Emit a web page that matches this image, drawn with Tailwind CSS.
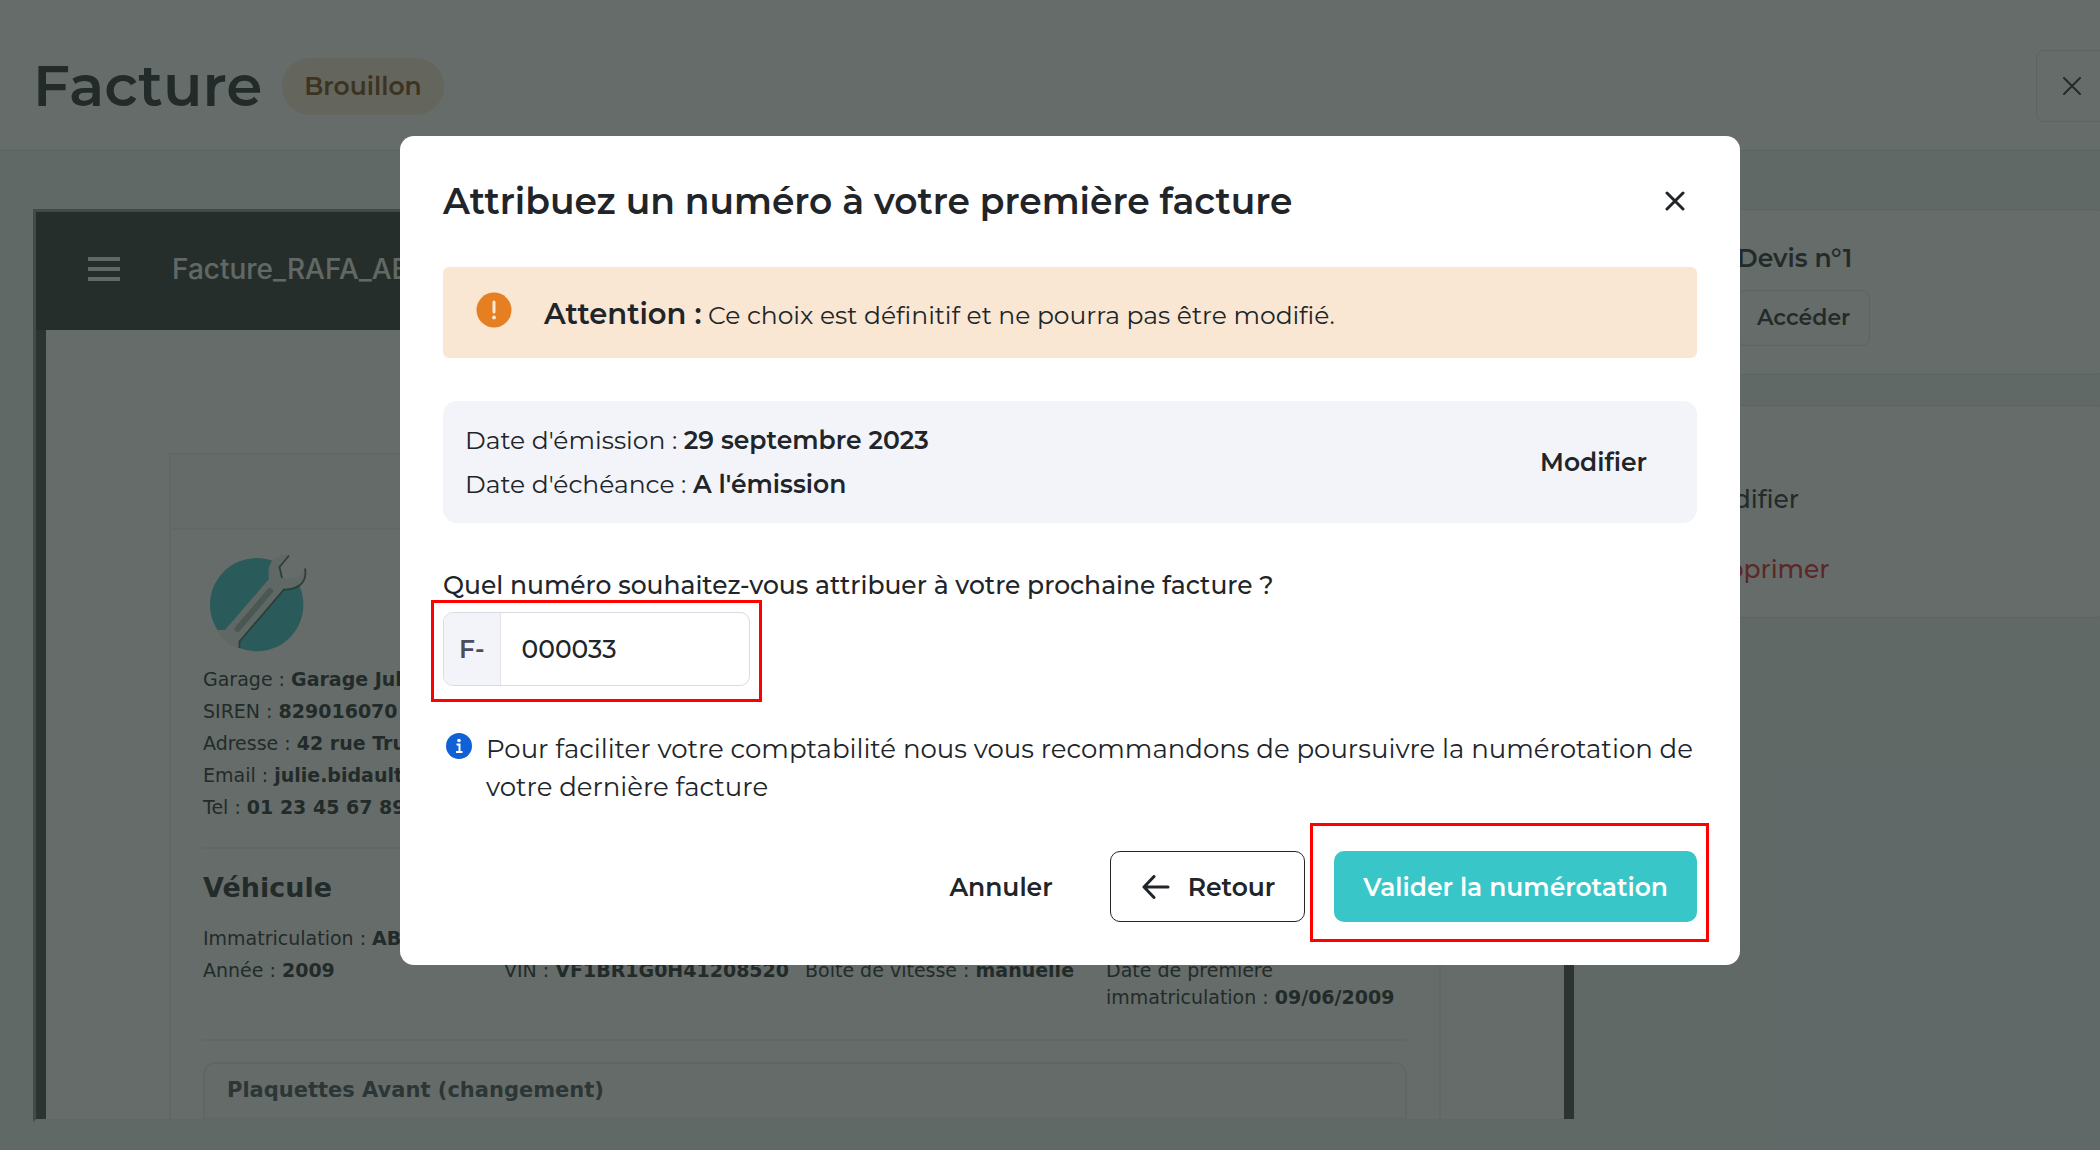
<!DOCTYPE html>
<html lang="fr">
  <head>
    <meta charset="UTF-8" />
    <meta name="viewport" content="width=device-width, initial-scale=1.0" />
    <title>Facture - Numérotation</title>
    <script src="https://cdn.jsdelivr.net/npm/@tailwindcss/browser@4"></script>
  </head>
  <body
    class="h-screen overflow-hidden bg-[#f0f3f7] font-[Montserrat,Inter,sans-serif] text-[25px] leading-8 text-[#212529]"
  >
    <div class="relative -mr-10 flex h-screen flex-col">
      <!-- En-tête -->
      <header
        class="flex h-[151px] shrink-0 items-center justify-between border-b border-[#dfe2ea] bg-white pl-[33px] pr-8 pt-[22px]"
      >
        <div class="flex items-center gap-5">
          <h1 class="text-[58px] font-semibold leading-[64px]">Facture</h1>
          <span
            class="flex h-[57px] items-center rounded-full bg-[#fae6d2] px-[22px] font-semibold text-[#77400f]"
            >Brouillon</span
          >
        </div>
        <button
          type="button"
          aria-label="Fermer la facture"
          class="flex size-[72px] items-center justify-center rounded-lg border border-[#dfe2ea]"
        >
          <svg
            class="size-5"
            viewBox="0 0 20 20"
            fill="none"
            stroke="currentColor"
            stroke-width="2"
            stroke-linecap="round"
          >
            <path d="M2 2l16 16M18 2L2 18" />
          </svg>
        </button>
      </header>

      <main
        class="grid min-h-0 flex-1 grid-cols-[minmax(0,1fr)_501px] gap-[30px] pb-7 pl-[33px] pr-8 pt-[58px]"
      >
        <!-- Aperçu PDF -->
        <section
          class="flex min-h-0 flex-col overflow-hidden border-[3px] border-b-[#eeeeee] border-l-[#8c8c8c] border-r-[#eeeeee] border-t-[#8c8c8c] bg-[#414447] font-['DejaVu_Sans',sans-serif] text-[19px] leading-[27px]"
        >
          <div
            class="flex h-[118px] shrink-0 items-center gap-[52px] bg-[#2e2f32] px-[52px] pb-1 font-[Inter,sans-serif] text-[28px] font-medium text-[#f1f1f1]"
          >
            <button type="button" aria-label="Menu">
              <svg class="h-6 w-8" viewBox="0 0 32 24" fill="currentColor">
                <path d="M0 0h32v4H0zM0 10h32v4H0zM0 20h32v4H0z" />
              </svg>
            </button>
            <span>Facture_RAFA_AB-123-CD</span>
          </div>

          <div
            class="mx-[10px] min-h-0 flex-1 overflow-hidden bg-white px-[123px] pt-[123px]"
          >
            <div class="border-2 border-[#f0eeee]">
              <div class="h-[75px] border-b-2 border-[#f0eeee] bg-[#fdfafa]"></div>
              <div class="px-8 pt-4">
                <svg class="-ml-2 h-[120px] w-[130px]" viewBox="0 0 130 120">
                  <circle cx="61.7" cy="58.7" r="46.7" fill="#3bc4c8" />
                  <path
                    d="M22 84H30L74 33Q72 20 78 14Q84 8 93 9L84 20L87 32Q92 34 99 32Q106 31 110 23Q111 32 104 38Q98 43 89 43L44 95V103Q30 99 22 84Z"
                    fill="#eaf2f1"
                  />
                  <path
                    d="M84 21L87 32Q92 34 99 32Q106 31 110 23L94 9.500Z"
                    fill="#ffffff"
                  />
                  <path
                    d="M94 9.500L84.500 21L87 32M110 22.500Q112 33 105 39Q99 44 89 43.500L44.500 95.500V102"
                    fill="none"
                    stroke="#3f6662"
                    stroke-width="1.800"
                  />
                  <path
                    d="M42.500 83L75 45"
                    stroke="#a5bbb8"
                    stroke-width="6"
                    stroke-linecap="round"
                  />
                </svg>
                <div class="flex flex-col gap-[5px]">
                  <p>Garage : <b>Garage Julie Bidault</b></p>
                  <p>SIREN : <b>829016070</b></p>
                  <p>Adresse : <b>42 rue Truffaut</b></p>
                  <p>Email : <b>julie.bidault@garage.fr</b></p>
                  <p>Tel : <b>01 23 45 67 89</b></p>
                </div>
                <hr class="mb-[23px] mt-[26px] border-t-2 border-[#f0eeee]" />
                <h2 class="mb-[21px] text-[27px] font-bold leading-8">
                  Véhicule
                </h2>
                <div class="grid grid-cols-4 gap-y-[5px]">
                  <p class="col-span-4">Immatriculation : <b>AB-123-CD</b></p>
                  <p>Année : <b>2009</b></p>
                  <p class="whitespace-nowrap">VIN : <b>VF1BR1G0H41208520</b></p>
                  <p>Boite de vitesse : <b>manuelle</b></p>
                  <p>Date de première immatriculation : <b>09/06/2009</b></p>
                </div>
                <hr class="mb-[21px] mt-7 border-t-2 border-[#f0eeee]" />
                <div class="rounded-t-xl border-2 border-[#ececec]">
                  <h3
                    class="rounded-t-xl border-b-2 border-[#ececec] bg-[#fdfafa] px-[22px] pb-[14px] pt-[13px] text-[21px] font-bold leading-[27px] text-[#404b57]"
                  >
                    Plaquettes Avant (changement)
                  </h3>
                  <div class="h-20"></div>
                </div>
              </div>
            </div>
          </div>
        </section>

        <!-- Colonne de droite -->
        <aside class="flex flex-col gap-[30px]">
          <div
            class="rounded-xl border border-[#dfe2ea] bg-white pb-7 pl-[129px] pt-8"
          >
            <p class="mb-4 font-semibold">Devis n°1</p>
            <button
              type="button"
              class="h-14 rounded-lg border border-[#dfe2ea] px-[19px] text-[22px] font-semibold"
            >
              Accéder
            </button>
          </div>
          <div
            class="flex flex-col items-start gap-[38px] rounded-xl border border-[#dfe2ea] bg-white pb-8 pl-[86px] pt-[77px] font-medium"
          >
            <button type="button">Modifier</button>
            <button type="button" class="text-[#e01b24]">Supprimer</button>
          </div>
        </aside>
      </main>

      <!-- Modale -->
      <div
        class="absolute inset-0 flex items-start justify-center bg-[#232d2a]/70 pt-[136px]"
      >
        <form
          role="dialog"
          aria-labelledby="titre"
          class="w-full max-w-[1340px] rounded-[14px] bg-white p-[43px]"
        >
          <div class="flex items-center justify-between">
            <h2 id="titre" class="text-[36px] font-semibold leading-[44px]">
              Attribuez un numéro à votre première facture
            </h2>
            <button
              type="button"
              aria-label="Fermer"
              class="flex size-11 items-center justify-center"
            >
              <svg
                class="size-5"
                viewBox="0 0 20 20"
                fill="none"
                stroke="currentColor"
                stroke-width="3"
                stroke-linecap="round"
              >
                <path d="M2 2l16 16M18 2L2 18" />
              </svg>
            </button>
          </div>

          <div
            class="mt-11 flex items-start gap-8 rounded-md bg-[#fae7d3] px-[33px] pb-[21px] pt-[25px] leading-[44px]"
          >
            <svg class="size-9 shrink-0" viewBox="0 0 36 36">
              <circle cx="18" cy="18" r="17.500" fill="#e67e22" />
              <path
                d="M18 10v10"
                stroke="#fae7d3"
                stroke-width="3"
                stroke-linecap="round"
              />
              <circle cx="18" cy="25.500" r="1.900" fill="#fae7d3" />
            </svg>
            <p>
              <strong class="text-[29px] font-semibold">Attention :</strong>
              Ce choix est définitif et ne pourra pas être modifié.
            </p>
          </div>

          <div
            class="mt-[43px] flex items-center justify-between rounded-[14px] bg-[#f3f4f9] px-[22px] py-[17px]"
          >
            <div class="leading-[44px]">
              <p>
                Date d'émission :
                <strong class="font-semibold">29 septembre 2023</strong>
              </p>
              <p>
                Date d'échéance :
                <strong class="font-semibold">A l'émission</strong>
              </p>
            </div>
            <button type="button" class="px-7 font-semibold">Modifier</button>
          </div>

          <label for="numero" class="mb-[11px] mt-[46px] block font-medium">
            Quel numéro souhaitez-vous attribuer à votre prochaine facture ?
          </label>
          <div class="relative w-[307px]">
            <div
              class="flex h-[74px] overflow-hidden rounded-[10px] border border-[#d9dbe2]"
            >
              <span
                class="flex items-center border-r border-[#e3e4ea] bg-[#f3f4f9] px-[15px] font-semibold text-[#4b4c5c]"
                >F-</span
              >
              <input
                id="numero"
                type="text"
                value="000033"
                class="min-w-0 flex-1 px-[21px] font-medium outline-none"
              />
            </div>
            <div
              class="pointer-events-none absolute -bottom-4 -left-3 -right-3 -top-3 border-[3px] border-[#ff0000]"
            ></div>
          </div>

          <div class="mt-11 flex items-start gap-[14px] pl-[3px]">
            <svg class="mt-[3px] size-[26px] shrink-0" viewBox="0 0 26 26">
              <circle cx="13" cy="13" r="13" fill="#1060d6" />
              <circle cx="13" cy="7.500" r="1.800" fill="#fff" />
              <path
                d="M10.500 11.500H13.500V18.500M10 19H16.500"
                fill="none"
                stroke="#fff"
                stroke-width="2"
              />
            </svg>
            <p class="-mr-2 text-[26px] leading-[38px]">
              Pour faciliter votre comptabilité nous vous recommandons de
              poursuivre la numérotation de votre dernière facture
            </p>
          </div>

          <div
            class="mt-[45px] flex items-center justify-end gap-[29px] font-semibold"
          >
            <button type="button" class="h-[71px] px-7">Annuler</button>
            <button
              type="button"
              class="flex h-[71px] items-center gap-[18px] rounded-[10px] border border-[#212529] px-[29px]"
            >
              <svg
                class="h-6 w-[30px]"
                viewBox="0 0 30 24"
                fill="none"
                stroke="currentColor"
                stroke-width="3"
                stroke-linecap="round"
                stroke-linejoin="round"
              >
                <path d="M28 12H4M14 1.500L4 12l10 10.500" />
              </svg>
              Retour
            </button>
            <div class="relative">
              <button
                type="submit"
                class="h-[71px] rounded-[10px] bg-[#38c6c9] px-[29px] text-white"
              >
                Valider la numérotation
              </button>
              <div
                class="pointer-events-none absolute -bottom-5 -left-6 -right-3 -top-7 border-[3px] border-[#ff0000]"
              ></div>
            </div>
          </div>
        </form>
      </div>
    </div>
  </body>
</html>
